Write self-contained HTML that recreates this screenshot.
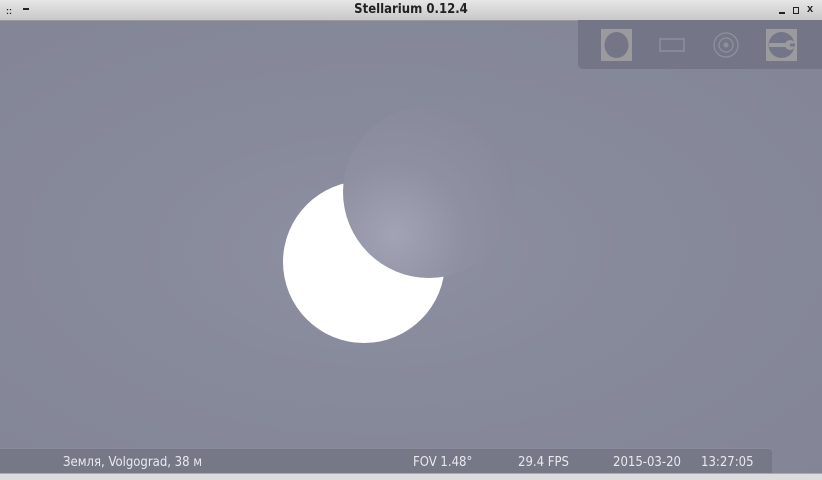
<!DOCTYPE html>
<html><head><style>
body{margin:0;width:822px;height:479px;overflow:hidden;font-family:"Liberation Sans","DejaVu Sans",sans-serif;background:#858799;position:relative}
#title{position:absolute;left:0;top:0;width:822px;height:20px;background:linear-gradient(#e6e6e6,#c8c8c8);border-bottom:1px solid #999;text-align:center;font:bold 13px "DejaVu Sans Condensed","Liberation Sans",sans-serif;line-height:20px;color:#222}
#sky{position:absolute;left:0;top:21px;width:822px;height:452px;background:radial-gradient(ellipse at 380px 230px,#8e90a2 0%,#878a9b 40%,#838597 100%)}
#panel{position:absolute;left:578px;top:20px;width:244px;height:49px;background:#747687;border-bottom-left-radius:5px}
#bar{position:absolute;left:0;top:448px;width:772px;height:25px;background:#767888;border-top-right-radius:4px;border-top:1px solid #8b8d9c;color:#e8e8ee;font:13px "DejaVu Sans Condensed","DejaVu Sans",sans-serif}
#bar span{position:absolute;top:6px}
#foot{position:absolute;left:0;top:473px;width:822px;height:6px;background:#dcdcdc;border-top:1px solid #aaa}
</style></head><body>
<div id="title">Stellarium 0.12.4</div>
<div style="position:absolute;left:6px;top:6px;font-size:9px;color:#222;font-weight:bold">::</div>
<div style="position:absolute;left:23px;top:8px;width:6px;height:2px;background:#222"></div>
<div style="position:absolute;left:779px;top:12px;width:6px;height:2px;background:#222"></div>
<div style="position:absolute;left:793px;top:7px;width:4px;height:5px;border:1px solid #222"></div>
<div style="position:absolute;left:807px;top:3px;font:bold 11px sans-serif;color:#222">x</div>
<div id="sky"></div>
<svg style="position:absolute;left:0;top:0" width="822" height="479">
<defs><radialGradient id="m" cx="0.3" cy="0.75" r="0.8"><stop offset="0" stop-color="#a2a3b4"/><stop offset="0.5" stop-color="#8f91a3"/><stop offset="1" stop-color="#888a9c"/></radialGradient></defs>
<circle cx="364" cy="262" r="81" fill="#fff"/>
<circle cx="429" cy="192" r="86" fill="url(#m)"/>
</svg>
<div id="panel">
<svg width="244" height="49">
<rect x="23" y="9" width="31" height="32" fill="#9a9a9f"/><ellipse cx="38.5" cy="25" rx="12" ry="13" fill="#747687"/>
<rect x="82" y="19" width="24" height="12" fill="none" stroke="#8e8f9e" stroke-width="1.5"/>
<circle cx="148" cy="25" r="12" fill="none" stroke="#8e8f9e" stroke-width="1.3"/>
<circle cx="148" cy="25" r="7" fill="none" stroke="#8e8f9e" stroke-width="1.3"/>
<circle cx="148" cy="25" r="2.5" fill="#8e8f9e"/>
<rect x="188" y="9" width="31" height="32" fill="#9a9a9f"/><circle cx="203.5" cy="25" r="13" fill="#747687"/>
<rect x="191" y="23" width="20" height="4" fill="#9a9a9f"/><circle cx="212" cy="25" r="5" fill="#9a9a9f"/><rect x="212" y="23.5" width="5" height="3" fill="#747687"/>
</svg></div>
<div id="bar">
<span style="left:63px">Земля, Volgograd, 38 м</span>
<span style="left:413px">FOV 1.48°</span>
<span style="left:518px">29.4 FPS</span>
<span style="left:613px">2015-03-20</span>
<span style="left:701px">13:27:05</span>
</div>
<div id="foot"></div>
</body></html>
